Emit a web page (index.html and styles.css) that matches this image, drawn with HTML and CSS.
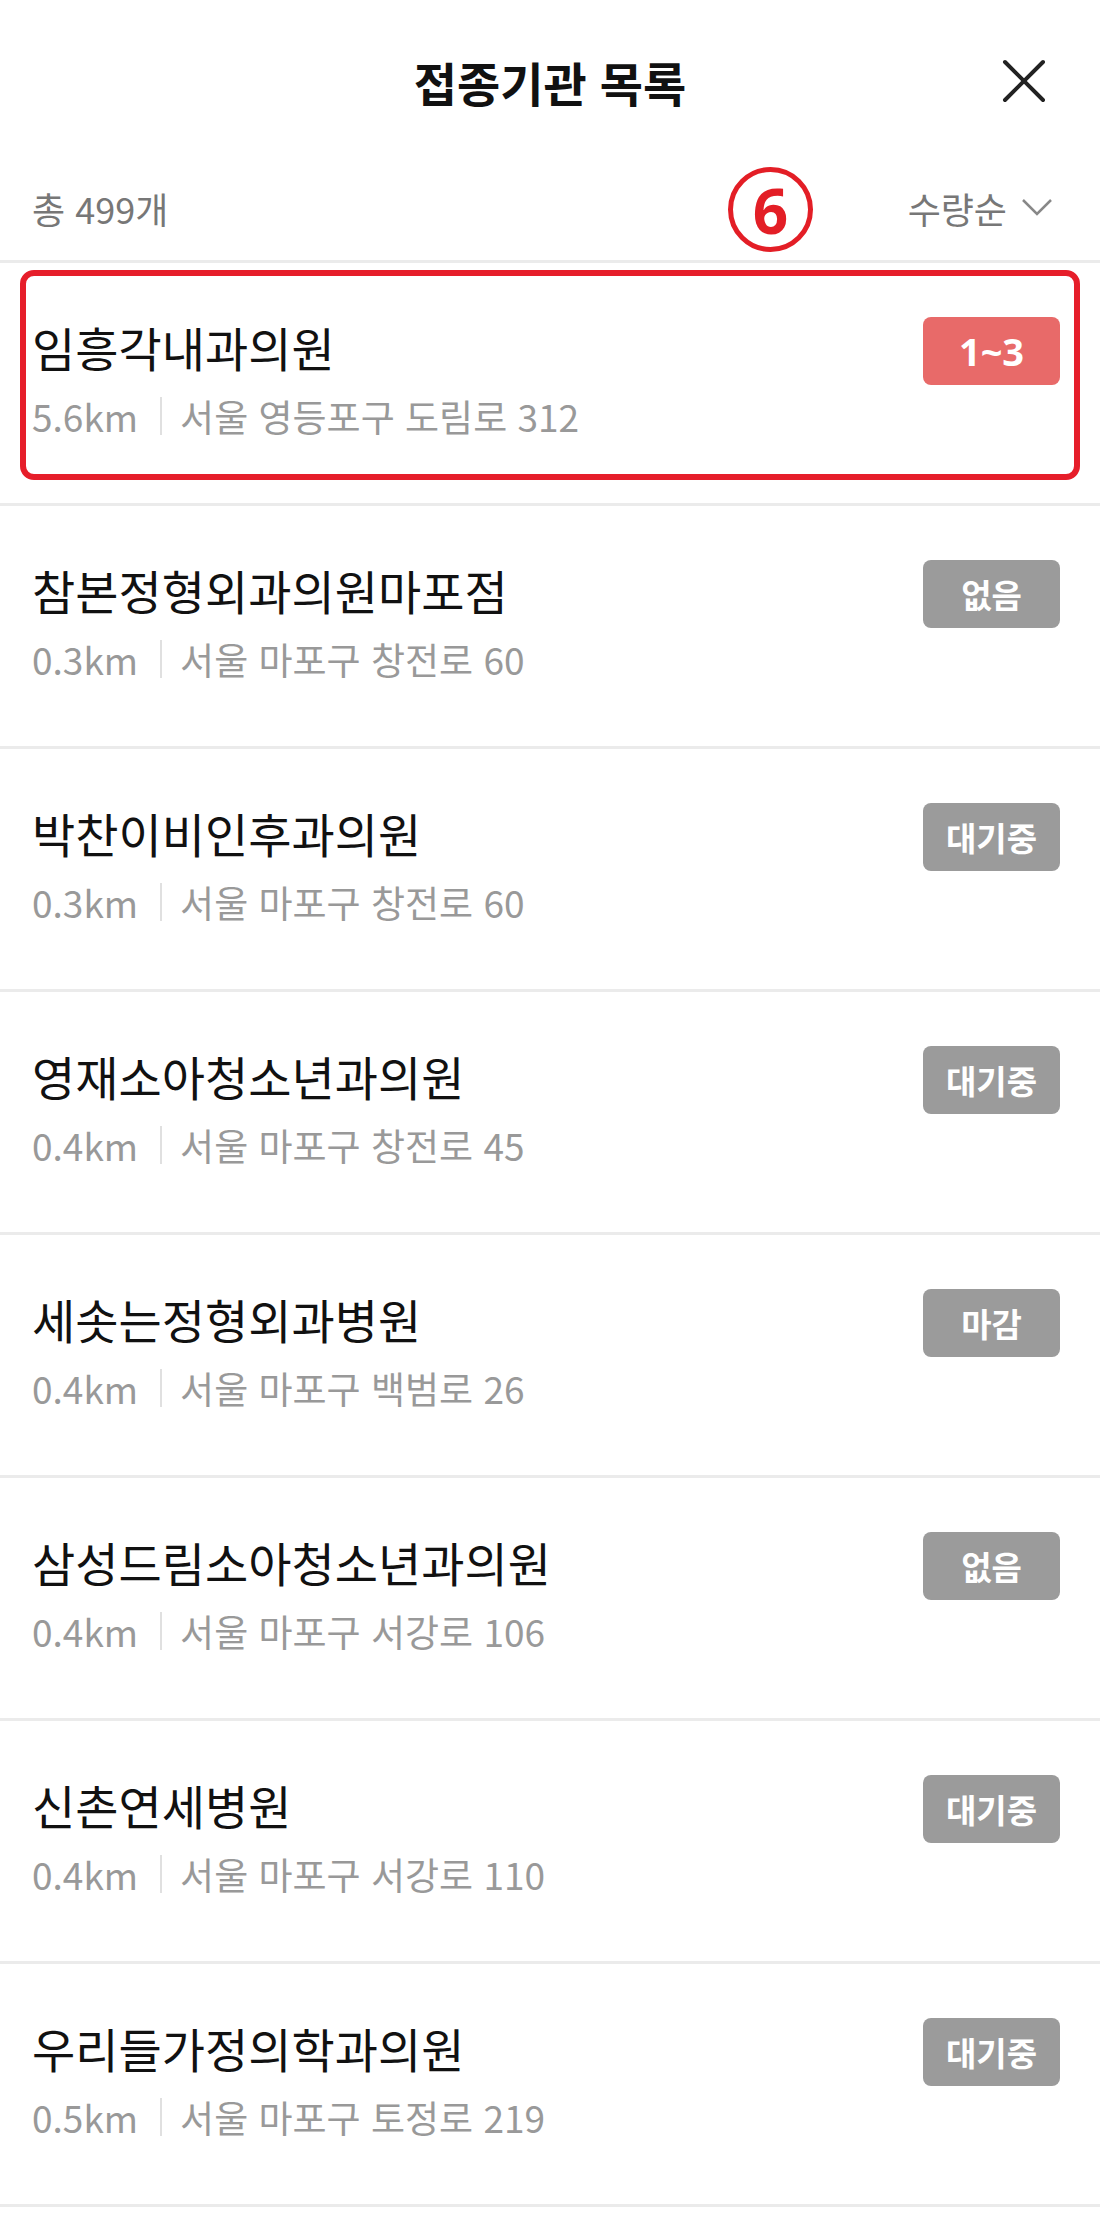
FILE: index.html
```html
<!DOCTYPE html>
<html lang="ko">
<head>
    <meta charset="UTF-8">
    <meta name="viewport" content="width=device-width, initial-scale=1.0">
    <title>접종기관 목록</title>
    <link rel="stylesheet" href="styles.css">
</head>
<body>
    <header class="header">
        <span></span>
        <h1 class="title">접종기관 목록</h1>
        <button class="close" type="button" aria-label="닫기">
            <svg width="44" height="44" viewBox="0 0 44 44">
                <path d="M3 3 L41 41 M41 3 L3 41" stroke="#222" stroke-width="4" stroke-linecap="round" fill="none"/>
            </svg>
        </button>
    </header>

    <div class="subbar">
        <span class="total">총 499개</span>
        <span class="step">6</span>
        <button class="sort" type="button">
            수량순
            <svg width="32" height="19" viewBox="0 0 32 19">
                <path d="M2 2 L16 16 L30 2" stroke="#888" stroke-width="2.5" fill="none"/>
            </svg>
        </button>
    </div>

    <ul class="list">
        <li class="item selected">
            <div class="info">
                <div class="name">임흥각내과의원</div>
                <div class="addr"><span class="dist">5.6km</span>서울 영등포구 도림로 312</div>
            </div>
            <span class="badge red wide">1~3</span>
        </li>
        <li class="item">
            <div class="info">
                <div class="name">참본정형외과의원마포점</div>
                <div class="addr"><span class="dist">0.3km</span>서울 마포구 창전로 60</div>
            </div>
            <span class="badge">없음</span>
        </li>
        <li class="item">
            <div class="info">
                <div class="name">박찬이비인후과의원</div>
                <div class="addr"><span class="dist">0.3km</span>서울 마포구 창전로 60</div>
            </div>
            <span class="badge">대기중</span>
        </li>
        <li class="item">
            <div class="info">
                <div class="name">영재소아청소년과의원</div>
                <div class="addr"><span class="dist">0.4km</span>서울 마포구 창전로 45</div>
            </div>
            <span class="badge">대기중</span>
        </li>
        <li class="item">
            <div class="info">
                <div class="name">세솟는정형외과병원</div>
                <div class="addr"><span class="dist">0.4km</span>서울 마포구 백범로 26</div>
            </div>
            <span class="badge">마감</span>
        </li>
        <li class="item">
            <div class="info">
                <div class="name">삼성드림소아청소년과의원</div>
                <div class="addr"><span class="dist">0.4km</span>서울 마포구 서강로 106</div>
            </div>
            <span class="badge">없음</span>
        </li>
        <li class="item">
            <div class="info">
                <div class="name">신촌연세병원</div>
                <div class="addr"><span class="dist">0.4km</span>서울 마포구 서강로 110</div>
            </div>
            <span class="badge">대기중</span>
        </li>
        <li class="item">
            <div class="info">
                <div class="name">우리들가정의학과의원</div>
                <div class="addr"><span class="dist">0.5km</span>서울 마포구 토정로 219</div>
            </div>
            <span class="badge">대기중</span>
        </li>
    </ul>
</body>
</html>
```

FILE: styles.css
```css
body {
    margin: 0;
    font-family: "Noto Sans CJK KR", "Noto Sans", sans-serif;
    background: #fff;
    color: #111;
}
button {
    font-family: inherit;
    background: none;
    border: none;
    padding: 0;
    cursor: pointer;
}
.header {
    height: 164px;
    display: grid;
    grid-template-columns: 1fr auto 1fr;
    align-items: center;
}
.title {
    margin: 0;
    font-size: 47px;
    font-weight: 700;
    line-height: 60px;
    color: #111;
}
.close {
    justify-self: end;
    margin-right: 54px;
    margin-top: -2px;
    display: flex;
}
.subbar {
    position: relative;
    height: 99px;
    box-sizing: border-box;
    padding: 0 47px 9px 32px;
    display: flex;
    align-items: center;
    justify-content: space-between;
    border-bottom: 3px solid #ebebeb;
    font-size: 36px;
    color: #777;
}
.total {
    line-height: 48px;
}
.step {
    position: absolute;
    left: 728px;
    top: 3px;
    width: 85px;
    height: 85px;
    box-sizing: border-box;
    border: 5px solid #e31e26;
    border-radius: 50%;
    display: flex;
    align-items: center;
    justify-content: center;
    color: #e31e26;
    font-family: "Noto Sans", sans-serif;
    font-size: 62px;
    font-weight: 700;
    line-height: 1;
}
.sort {
    display: flex;
    align-items: center;
    gap: 14px;
    font-size: 36px;
    color: #777;
    line-height: 48px;
}
.list {
    list-style: none;
    margin: 0;
    padding: 0;
}
.item {
    position: relative;
    height: 240px;
    box-sizing: content-box;
    padding: 0 40px 0 32px;
    display: flex;
    justify-content: space-between;
    align-items: flex-start;
    border-bottom: 3px solid #ebebeb;
}
.item.selected::after {
    content: "";
    position: absolute;
    left: 20px;
    right: 20px;
    top: 7px;
    height: 210px;
    box-sizing: border-box;
    border: 6px solid #e61e2a;
    border-radius: 14px;
}
.info {
    padding-top: 50px;
}
.name {
    font-size: 47px;
    line-height: 68px;
    color: #111;
}
.addr {
    margin-top: 11px;
    font-size: 37px;
    line-height: 48px;
    color: #999;
    display: flex;
    align-items: center;
}
.dist {
    display: flex;
    align-items: center;
}
.dist::after {
    content: "";
    width: 2px;
    height: 38px;
    background: #e0e0e0;
    margin: 0 18px 0 22px;
}
.badge {
    margin-top: 54px;
    width: 137px;
    height: 68px;
    border-radius: 8px;
    background: #9b9b9b;
    color: #fff;
    font-size: 33px;
    font-weight: 600;
    display: flex;
    align-items: center;
    justify-content: center;
}
.badge.red {
    background: #e86a69;
}
.badge.wide {
    font-family: "Noto Sans", sans-serif;
    font-size: 38px;
    font-weight: 700;
}
```
